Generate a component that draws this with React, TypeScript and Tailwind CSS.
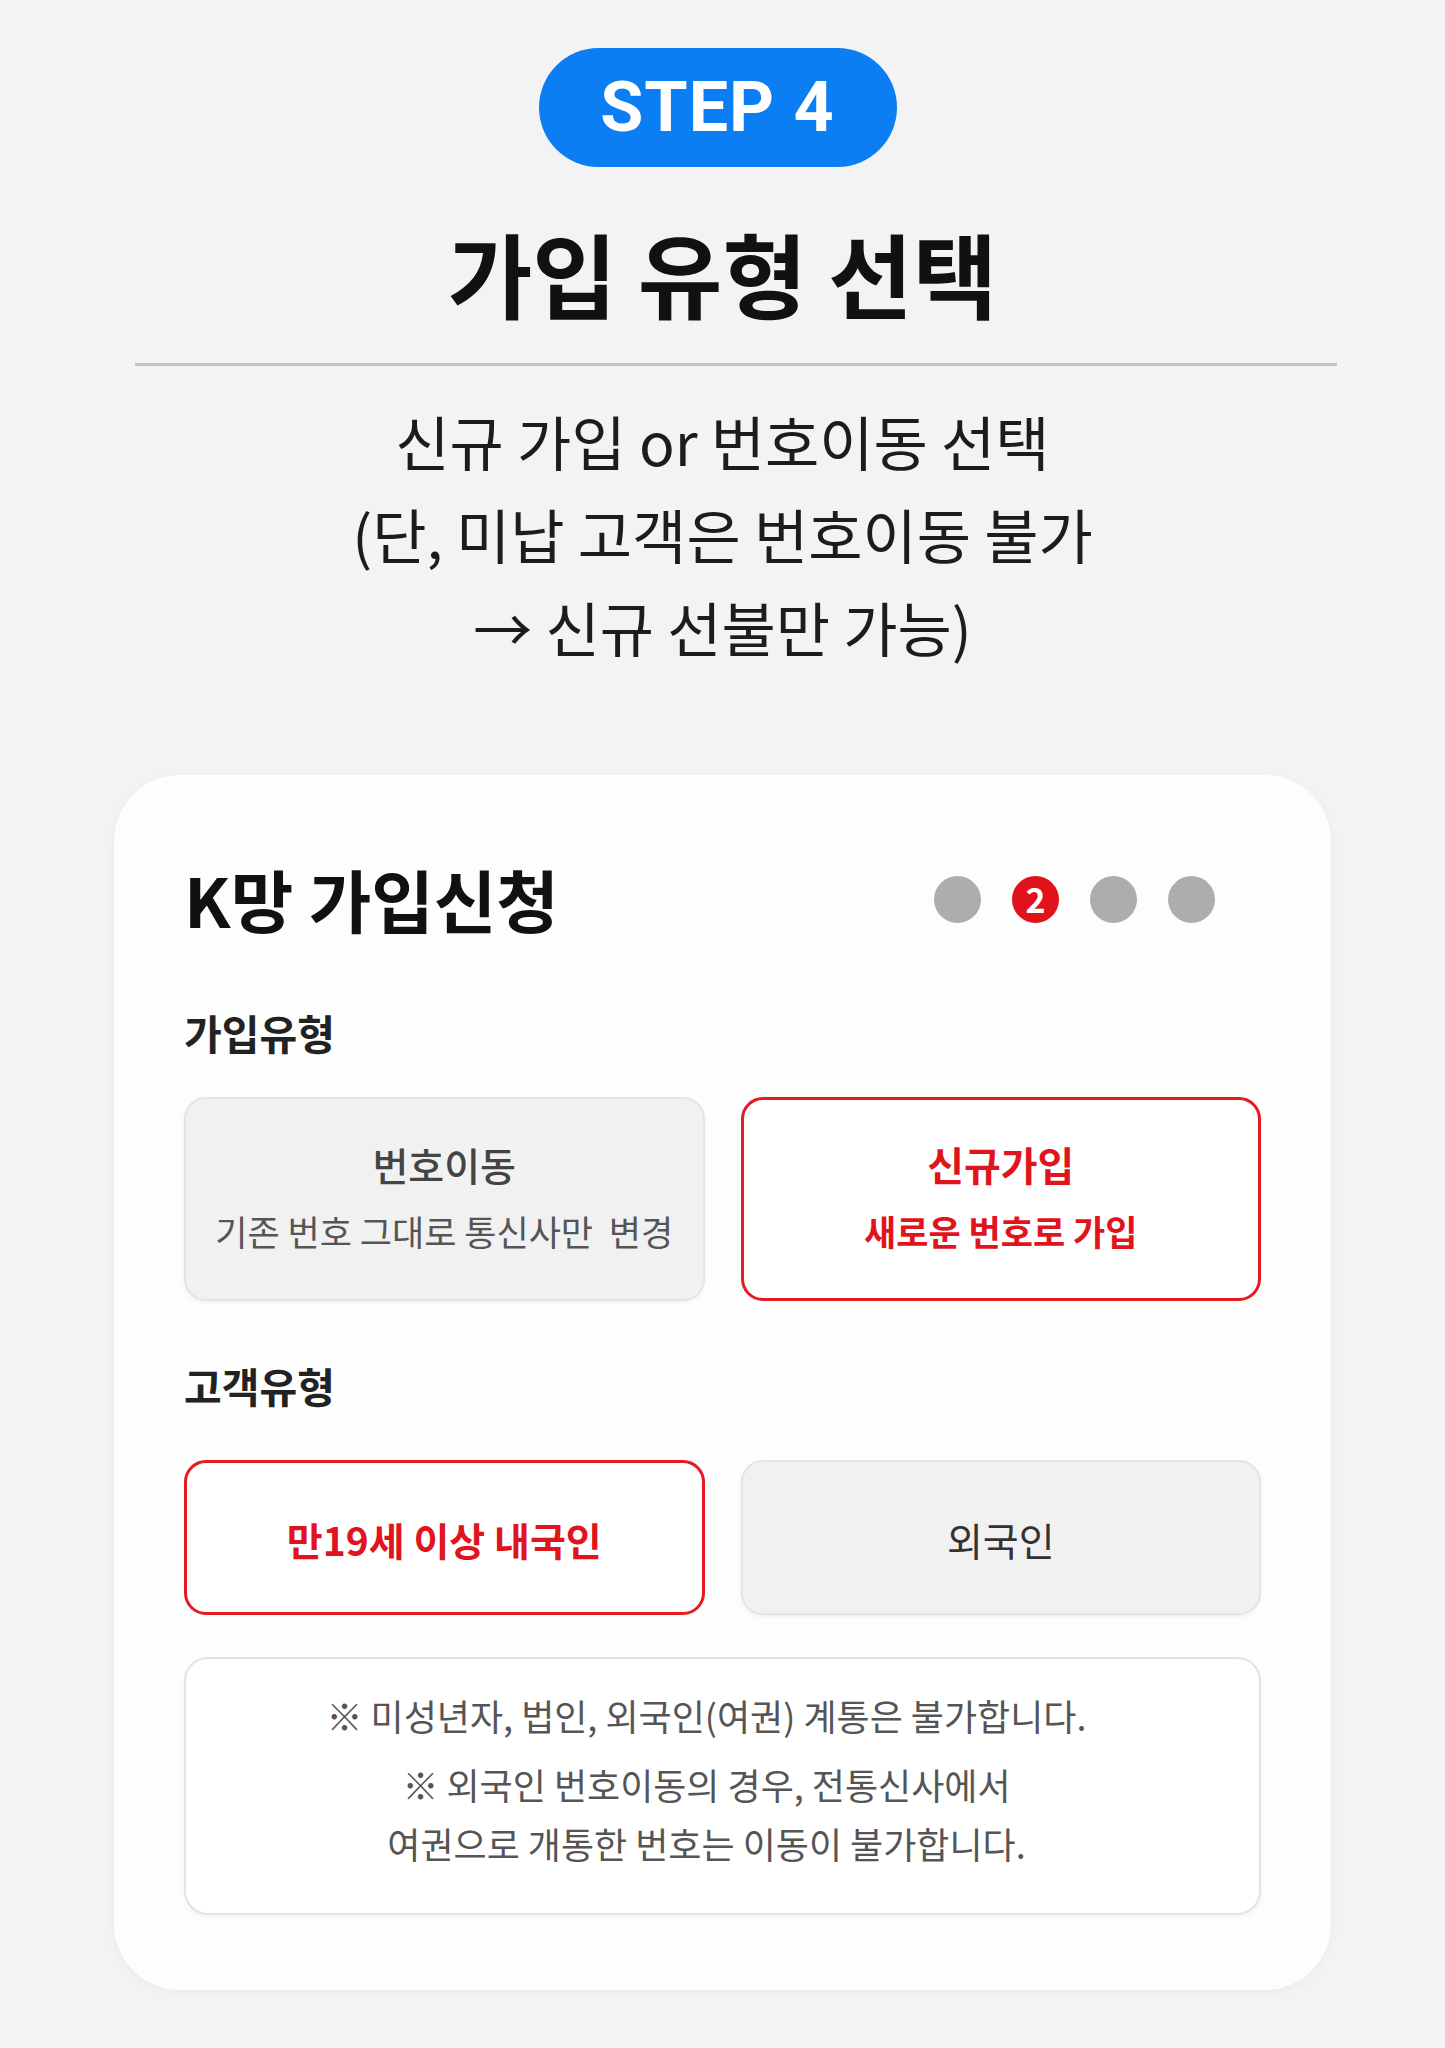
import React from "react";

const KR = { fontFamily: '"Noto Sans CJK KR", "Noto Sans", sans-serif' };

function StepDots() {
  return (
    <div className="mr-[46px] flex items-center gap-[31px]">
      <span className="h-[47px] w-[47px] rounded-full bg-[#adadad]" />
      <span className="flex h-[47px] w-[47px] items-center justify-center rounded-full bg-[#e0121b] text-[34px] font-bold leading-none text-white">
        2
      </span>
      <span className="h-[47px] w-[47px] rounded-full bg-[#adadad]" />
      <span className="h-[47px] w-[47px] rounded-full bg-[#adadad]" />
    </div>
  );
}

export default function App() {
  return (
    <div
      className="flex min-h-[2048px] w-full flex-col items-center bg-[#f3f3f3] pt-[48px] text-[#111]"
      style={KR}
    >
      {/* step badge */}
      <div
        className="mr-[10px] flex h-[119px] w-[358px] items-center justify-center rounded-full bg-[#0b7ef3] text-[70px] font-bold tracking-[1px] text-white"
        style={{ fontFamily: '"Roboto", "Inter", sans-serif' }}
      >
        STEP 4
      </div>

      <h1 className="mt-[59px] text-[92px] font-bold leading-none text-[#111]">
        가입 유형 선택
      </h1>

      <div className="ml-[26px] mt-[45px] h-[3px] w-[1202px] bg-[#c4c4c4]" />

      <div className="mt-[28px] text-center text-[59px] font-normal leading-[93px] text-[#1c1c1c]">
        <p>신규 가입 or 번호이동 선택</p>
        <p>(단, 미납 고객은 번호이동 불가</p>
        <p>→ 신규 선불만 가능)</p>
      </div>

      {/* application card */}
      <div className="mt-[102px] flex h-[1215px] w-[1217px] flex-col rounded-[66px] bg-[#fdfdfd] px-[70px] pt-[86px] shadow-[0_2px_10px_rgba(0,0,0,0.04)]">
        <div className="flex items-center justify-between">
          <h2 className="text-[68px] font-bold leading-[76px] text-[#111]">K망 가입신청</h2>
          <StepDots />
        </div>

        <h3 className="mt-[72px] text-[41px] font-bold leading-[46px] text-[#222]">가입유형</h3>

        <div className="mt-[42px] grid grid-cols-2 gap-[36px]">
          <div className="flex h-[204px] flex-col items-center justify-center rounded-[22px] border-2 border-[#e4e4e4] bg-[#f1f1f1] pb-[6px] shadow-[0_2px_4px_rgba(0,0,0,0.05)]">
            <span className="text-[39px] font-medium leading-[48px] text-[#444]">번호이동</span>
            <span className="mt-[22px] whitespace-pre text-[35px] font-normal leading-[42px] text-[#555]">
              기존 번호 그대로 통신사만  변경
            </span>
          </div>
          <div className="flex h-[204px] flex-col items-center justify-center rounded-[22px] border-[3px] border-[#e51a22] bg-white pb-[6px]">
            <span className="text-[40px] font-bold leading-[48px] text-[#e0141c]">신규가입</span>
            <span className="mt-[22px] text-[35px] font-bold leading-[42px] text-[#e0141c]">
              새로운 번호로 가입
            </span>
          </div>
        </div>

        <h3 className="mt-[61px] text-[41px] font-bold leading-[46px] text-[#222]">고객유형</h3>

        <div className="mt-[52px] grid grid-cols-2 gap-[36px]">
          <div className="flex h-[155px] items-center justify-center rounded-[22px] border-[3px] border-[#e51a22] bg-white pt-[4px]">
            <span className="text-[39px] font-bold text-[#e0141c]">만19세 이상 내국인</span>
          </div>
          <div className="flex h-[155px] items-center justify-center rounded-[22px] border-2 border-[#e4e4e4] bg-[#f1f1f1] pt-[4px] shadow-[0_2px_4px_rgba(0,0,0,0.05)]">
            <span className="text-[39px] font-normal text-[#333]">외국인</span>
          </div>
        </div>

        <div className="mt-[42px] flex h-[258px] flex-col items-center rounded-[24px] border-2 border-[#e3e3e3] bg-white pr-[32px] pt-[27px] text-center text-[36px] leading-[59px] text-[#555] shadow-[0_2px_4px_rgba(0,0,0,0.04)]">
          <p>※ 미성년자, 법인, 외국인(여권) 계통은 불가합니다.</p>
          <p className="mt-[10px]">※ 외국인 번호이동의 경우, 전통신사에서</p>
          <p>여권으로 개통한 번호는 이동이 불가합니다.</p>
        </div>
      </div>
    </div>
  );
}
